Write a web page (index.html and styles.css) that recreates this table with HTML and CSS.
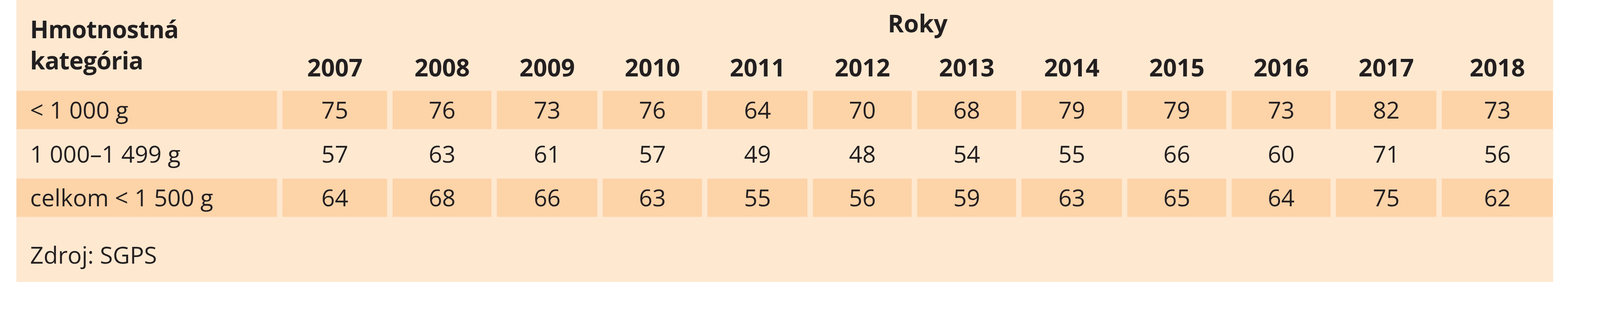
FILE: index.html
```html
<!DOCTYPE html>
<html lang="sk">
<head>
<meta charset="utf-8">
<title>Hmotnostná kategória</title>
<link rel="stylesheet" href="styles.css">
</head>
<body>
<div class="panel">
  <div class="grid">
    <div class="cat-head">Hmotnostná<br>kategória</div>
    <div class="roky">Roky</div>
    <div class="year">2007</div>
    <div class="year">2008</div>
    <div class="year">2009</div>
    <div class="year">2010</div>
    <div class="year">2011</div>
    <div class="year">2012</div>
    <div class="year">2013</div>
    <div class="year">2014</div>
    <div class="year">2015</div>
    <div class="year">2016</div>
    <div class="year">2017</div>
    <div class="year">2018</div>

    <div class="label band">&lt; 1 000 g</div>
    <div class="val band">75</div>
    <div class="val band">76</div>
    <div class="val band">73</div>
    <div class="val band">76</div>
    <div class="val band">64</div>
    <div class="val band">70</div>
    <div class="val band">68</div>
    <div class="val band">79</div>
    <div class="val band">79</div>
    <div class="val band">73</div>
    <div class="val band">82</div>
    <div class="val band">73</div>

    <div class="label">1 000–1 499 g</div>
    <div class="val">57</div>
    <div class="val">63</div>
    <div class="val">61</div>
    <div class="val">57</div>
    <div class="val">49</div>
    <div class="val">48</div>
    <div class="val">54</div>
    <div class="val">55</div>
    <div class="val">66</div>
    <div class="val">60</div>
    <div class="val">71</div>
    <div class="val">56</div>

    <div class="label band">celkom &lt; 1 500 g</div>
    <div class="val band">64</div>
    <div class="val band">68</div>
    <div class="val band">66</div>
    <div class="val band">63</div>
    <div class="val band">55</div>
    <div class="val band">56</div>
    <div class="val band">59</div>
    <div class="val band">63</div>
    <div class="val band">65</div>
    <div class="val band">64</div>
    <div class="val band">75</div>
    <div class="val band">62</div>
  </div>
  <div class="source">Zdroj: SGPS</div>
</div>
</body>
</html>
```

FILE: styles.css
```css
:root {
  /* one pixel of the 4355px-wide design, whatever the real viewport */
  --u: calc(100vw / 4355);
}

html, body {
  margin: 0;
  padding: 0;
  background: #ffffff;
  overflow: hidden;
}

body {
  font-family: "Open Sans", "Noto Sans", sans-serif;
  color: #231f20;
}

.panel {
  margin-left: calc(45 * var(--u));
  width: calc(4182 * var(--u));
  height: calc(769 * var(--u));
  background: #fee8d0;
  box-sizing: border-box;
}

.grid {
  display: grid;
  grid-template-columns:
    calc(709 * var(--u)) calc(285 * var(--u)) calc(269 * var(--u))
    calc(273 * var(--u)) calc(270 * var(--u)) calc(272 * var(--u))
    calc(269 * var(--u)) calc(269 * var(--u)) calc(273 * var(--u))
    calc(269 * var(--u)) calc(269 * var(--u)) calc(273 * var(--u))
    calc(302 * var(--u));
  grid-template-rows:
    calc(120 * var(--u)) calc(97 * var(--u))
    calc(104 * var(--u)) calc(104 * var(--u)) calc(104 * var(--u));
  column-gap: calc(15 * var(--u));
  row-gap: calc(15.5 * var(--u));
}

.cat-head {
  grid-row: 1 / 3;
  grid-column: 1;
  font-weight: 700;
  font-size: calc(66 * var(--u));
  line-height: calc(85 * var(--u));
  padding: calc(37 * var(--u)) 0 0 calc(37 * var(--u));
  letter-spacing: calc(-1 * var(--u));
}

.roky {
  grid-row: 1;
  grid-column: 2 / 14;
  text-align: center;
  font-weight: 700;
  font-size: calc(66 * var(--u));
  padding-top: calc(18 * var(--u));
}

.year {
  grid-row: 2;
  text-align: center;
  font-weight: 700;
  font-size: calc(66 * var(--u));
  padding-top: calc(3 * var(--u));
}

.label,
.val {
  font-size: calc(64 * var(--u));
  line-height: calc(104 * var(--u));
}

.label {
  padding-left: calc(37 * var(--u));
}

.val {
  text-align: center;
}

.band {
  background: #fdd3a8;
}

.source {
  font-size: calc(64 * var(--u));
  padding-left: calc(37 * var(--u));
  margin-top: calc(60 * var(--u));
}
```
